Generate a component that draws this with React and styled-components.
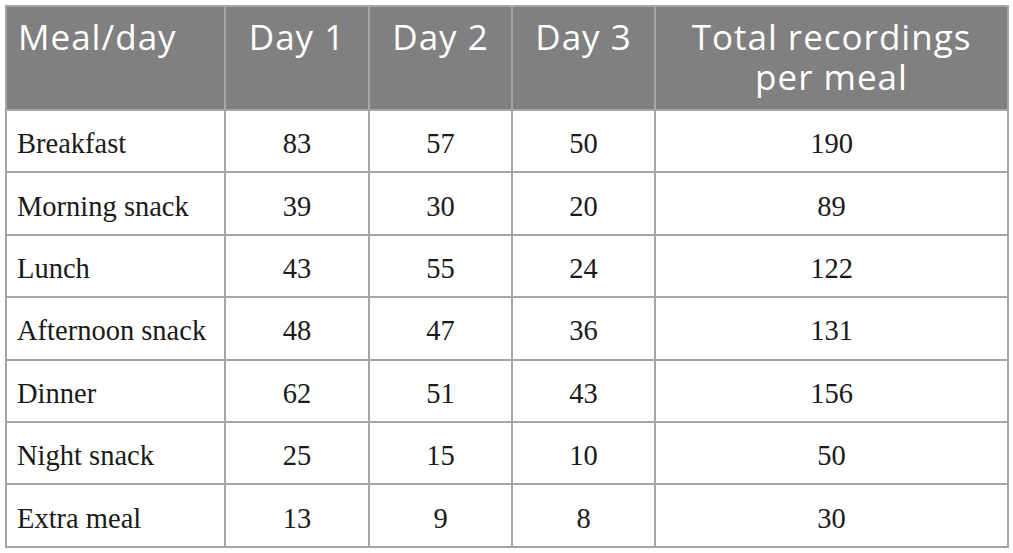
import React from 'react';
import styled, { createGlobalStyle } from 'styled-components';

const GlobalStyle = createGlobalStyle`
	body {
		margin: 0;
		background: #fff;
	}
`;

const rows = [
	['Breakfast', 83, 57, 50, 190],
	['Morning snack', 39, 30, 20, 89],
	['Lunch', 43, 55, 24, 122],
	['Afternoon snack', 48, 47, 36, 131],
	['Dinner', 62, 51, 43, 156],
	['Night snack', 25, 15, 10, 50],
	['Extra meal', 13, 9, 8, 30],
];

const widths = [219, 144, 143, 143, 353];

const App = () => (
	<>
		<GlobalStyle />
		<Wrap>
			<Table>
				<colgroup>
					{widths.map((w, i) => (
						<col key={i} style={{ width: w }} />
					))}
				</colgroup>
				<thead>
					<HeadRow>
						<Head $left>Meal/day</Head>
						<Head>Day 1</Head>
						<Head>Day 2</Head>
						<Head>Day 3</Head>
						<Head>
							Total recordings
							<br />
							per meal
						</Head>
					</HeadRow>
				</thead>
				<tbody>
					{rows.map((r) => (
						<Row key={r[0]}>
							{r.map((v, i) => (
								<Cell key={i} $left={i === 0}>
									{v}
								</Cell>
							))}
						</Row>
					))}
				</tbody>
			</Table>
		</Wrap>
	</>
);

const Wrap = styled.div`
	padding: 5px;
`;

const Table = styled.table`
	width: 1002px;
	table-layout: fixed;
	border-collapse: collapse;
	border: 2px solid #a5a5a5;
`;

const HeadRow = styled.tr`
	height: 104px;
`;

const Head = styled.th`
	background: #808080;
	color: #fff;
	border: 2px solid #a5a5a5;
	padding: 10px 8px 0 ${(p) => (p.$left ? '11px' : '8px')};
	vertical-align: top;
	text-align: ${(p) => (p.$left ? 'left' : 'center')};
	font-family: 'Open Sans', sans-serif;
	font-weight: 400;
	font-size: 35px;
	letter-spacing: 1px;
	line-height: 40px;
	white-space: nowrap;
`;

const Row = styled.tr`
	height: 62.4px;
`;

const Cell = styled.td`
	border: 2px solid #a5a5a5;
	padding: 6px 10px 0;
	text-align: ${(p) => (p.$left ? 'left' : 'center')};
	vertical-align: middle;
	font-family: 'Liberation Serif', serif;
	font-size: 28.5px;
	color: #1a1a1a;
	white-space: nowrap;
`;

export default App;
